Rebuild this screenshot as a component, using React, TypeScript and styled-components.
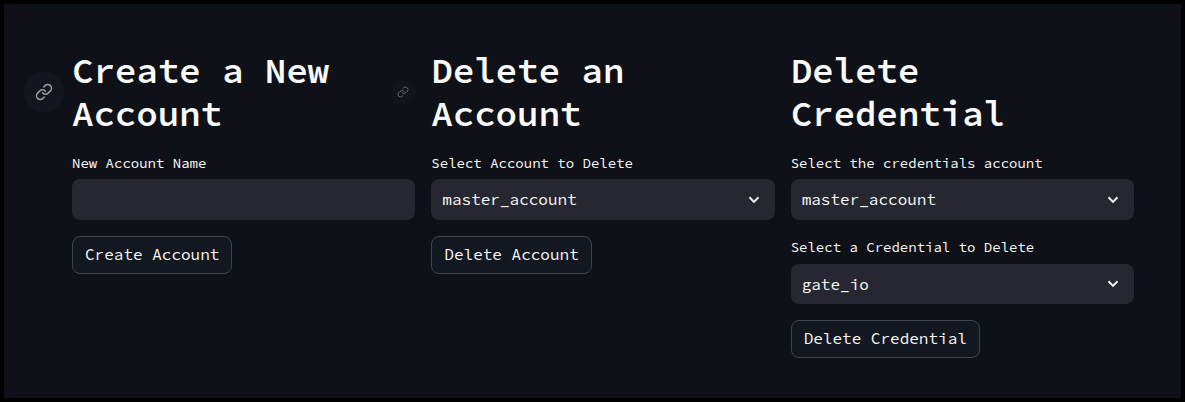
import React from "react";
import styled, { createGlobalStyle } from "styled-components";

const GlobalStyle = createGlobalStyle`
  *, *::before, *::after { box-sizing: border-box; }
  body {
    margin: 0;
    background: #000;
    color: #fafafa;
    font-family: "Source Code Pro", "DejaVu Sans Mono", monospace;
  }
`;

const Page = styled.main`
  height: 402px;
  border: 4px solid #000;
  background: #0e1117;
  padding: 28.8px 47px 0 68px;
  display: grid;
  grid-template-columns: repeat(3, minmax(0, 1fr));
  gap: 16px;
  align-items: start;
`;

const Column = styled.section`
  display: flex;
  flex-direction: column;
  align-items: flex-start;
`;

const Heading = styled.h2`
  position: relative;
  margin: 0;
  padding: 16px 0 15.8px;
  width: 100%;
  font-size: 36px;
  font-weight: 600;
  line-height: 43.2px;
  letter-spacing: -0.18px;
`;

const Anchor = styled.a<{ $size: number; $opacity: number }>`
  position: absolute;
  left: -28px;
  top: 59.2px;
  width: ${(p) => p.$size}px;
  height: ${(p) => p.$size}px;
  transform: translate(-50%, -50%);
  display: flex;
  align-items: center;
  justify-content: center;
  border-radius: 50%;
  background: rgba(23, 27, 36, ${(p) => p.$opacity});
  color: rgba(250, 250, 250, ${(p) => p.$opacity});
`;

const Label = styled.label`
  height: 24px;
  margin-bottom: 4.2px;
  font-size: 14px;
  line-height: 24px;
  white-space: nowrap;
`;

const fieldSurface = `
  width: 100%;
  height: 40.4px;
  margin-bottom: 15.8px;
  border: 0;
  border-radius: 8px;
  background: #262730;
  color: #fafafa;
`;

const TextInput = styled.input`
  ${fieldSurface}
  padding: 0 12px;
  outline: none;
  font: inherit;
`;

const Select = styled.div`
  ${fieldSurface}
  display: flex;
  align-items: center;
  justify-content: space-between;
  padding: 0 11px;
  font-size: 16px;
  line-height: 24px;

  svg {
    margin-top: 0.8px;
  }
`;

const Button = styled.button`
  height: 38.4px;
  margin: 0.2px 0 0;
  padding: 0 12px;
  border: 1px solid #41444c;
  border-radius: 8px;
  background: #131720;
  color: #fafafa;
  font-family: inherit;
  font-size: 16px;
  line-height: 25.6px;
  white-space: nowrap;
`;

function LinkIcon({ size }: { size: number }) {
  return (
    <svg width={size} height={size} viewBox="0 0 24 24" fill="none" stroke="currentColor" strokeWidth="2" strokeLinecap="round" strokeLinejoin="round">
      <path d="M10 13a5 5 0 0 0 7.54.54l3-3a5 5 0 0 0-7.07-7.07l-1.72 1.71" />
      <path d="M14 11a5 5 0 0 0-7.54-.54l-3 3a5 5 0 0 0 7.07 7.07l1.71-1.71" />
    </svg>
  );
}

function Chevron() {
  return (
    <svg width="20" height="20" viewBox="0 0 24 24" fill="currentColor">
      <path d="M16.59 8.2 12 12.77 7.41 8.2 6 9.6l6 6 6-6z" stroke="currentColor" strokeWidth="0.5" />
    </svg>
  );
}

function SelectField({ label, value }: { label: string; value: string }) {
  return (
    <>
      <Label>{label}</Label>
      <Select role="combobox" aria-label={label}>
        <span>{value}</span>
        <Chevron />
      </Select>
    </>
  );
}

export default function App() {
  return (
    <>
      <GlobalStyle />
      <Page>
        <Column>
          <Heading>
            <Anchor $size={40} $opacity={0.6}><LinkIcon size={18} /></Anchor>
            Create a New<br />Account
          </Heading>
          <Label htmlFor="account-name">New Account Name</Label>
          <TextInput id="account-name" />
          <Button>Create Account</Button>
        </Column>
        <Column>
          <Heading>
            <Anchor $size={24} $opacity={0.35}><LinkIcon size={12} /></Anchor>
            Delete an<br />Account
          </Heading>
          <SelectField label="Select Account to Delete" value="master_account" />
          <Button>Delete Account</Button>
        </Column>
        <Column>
          <Heading>Delete<br />Credential</Heading>
          <SelectField label="Select the credentials account" value="master_account" />
          <SelectField label="Select a Credential to Delete" value="gate_io" />
          <Button>Delete Credential</Button>
        </Column>
      </Page>
    </>
  );
}
